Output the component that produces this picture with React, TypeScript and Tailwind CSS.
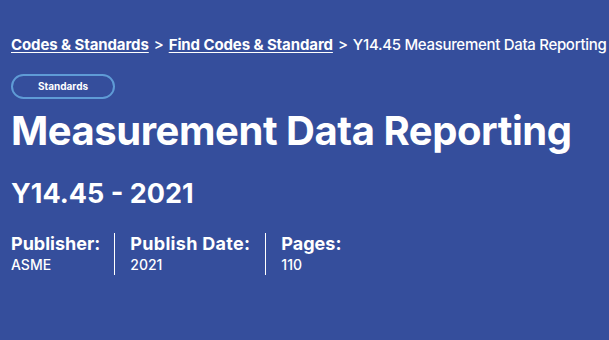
export default function App() {
  return (
    <div className="min-h-[340px] w-full overflow-hidden bg-[#354e9c] px-[11px] pt-[35px] text-white font-['Inter','Open_Sans',sans-serif]">
      <nav className="flex items-center gap-[5px] text-[15px] font-bold leading-[20px] whitespace-nowrap tracking-[-0.1px]">
        <a href="#" className="underline underline-offset-2">Codes &amp; Standards</a>
        <span className="font-medium">&gt;</span>
        <a href="#" className="underline underline-offset-2">Find Codes &amp; Standard</a>
        <span className="font-medium">&gt;</span>
        <span className="font-medium tracking-[-0.3px]">Y14.45 Measurement Data Reporting</span>
      </nav>
      <div className="mt-[19px] flex h-[25px] w-[104px] items-center justify-center rounded-full border-2 border-[#5f9bd6] text-[10px] font-bold">
        Standards
      </div>
      <h1 className="mt-[10px] text-[40px] font-bold leading-[44px] whitespace-nowrap tracking-[-0.45px]">Measurement Data Reporting</h1>
      <h2 className="mt-[25px] text-[27px] font-bold leading-[32px]">Y14.45 - 2021</h2>
      <div className="mt-[23px] flex">
        <div className="pr-[14px]">
          <div className="text-[18px] font-bold leading-[22px]">Publisher:</div>
          <div className="text-[14px] font-medium leading-[20px]">ASME</div>
        </div>
        <div className="border-l border-white pl-[15px] pr-[15px]">
          <div className="text-[18px] font-bold leading-[22px] tracking-[0.3px]">Publish Date:</div>
          <div className="text-[14px] font-medium leading-[20px]">2021</div>
        </div>
        <div className="border-l border-white pl-[15px]">
          <div className="text-[18px] font-bold leading-[22px]">Pages:</div>
          <div className="text-[14px] font-medium leading-[20px]">110</div>
        </div>
      </div>
    </div>
  );
}
